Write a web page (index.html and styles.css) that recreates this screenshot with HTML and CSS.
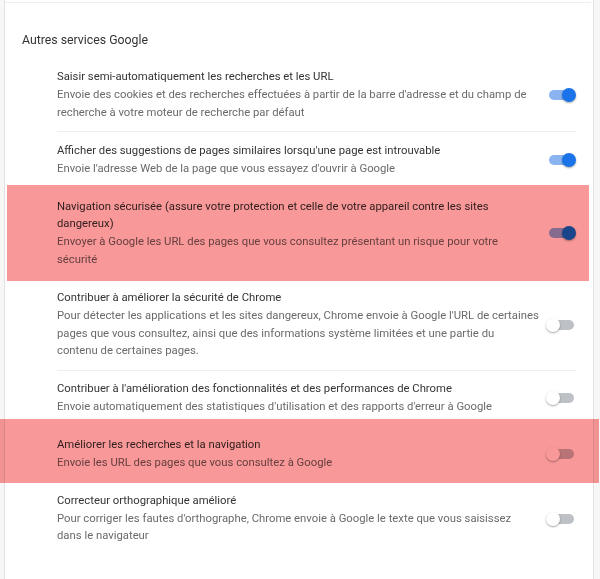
FILE: index.html
```html
<!DOCTYPE html>
<html lang="fr">
<head>
<meta charset="utf-8">
<title>Autres services Google</title>
<link rel="stylesheet" href="styles.css">
</head>
<body>
<div class="card">
  <div class="divider"></div>
  <h2 class="section-title">Autres services Google</h2>
  <div class="list">
    <div class="row">
      <div class="text">
        <div class="title">Saisir semi-automatiquement les recherches et les URL</div>
        <div class="desc">Envoie des cookies et des recherches effectuées à partir de la barre d'adresse et du champ de recherche à votre moteur de recherche par défaut</div>
      </div>
      <span class="toggle on"><span class="knob"></span></span>
    </div>
    <div class="row">
      <div class="text">
        <div class="title">Afficher des suggestions de pages similaires lorsqu'une page est introuvable</div>
        <div class="desc">Envoie l'adresse Web de la page que vous essayez d'ouvrir à Google</div>
      </div>
      <span class="toggle on"><span class="knob"></span></span>
    </div>
    <div class="row mark mark-a">
      <div class="text">
        <div class="title">Navigation sécurisée (assure votre protection et celle de votre appareil contre les sites dangereux)</div>
        <div class="desc">Envoyer à Google les URL des pages que vous consultez présentant un risque pour votre<br>sécurité</div>
      </div>
      <span class="toggle on"><span class="knob"></span></span>
    </div>
    <div class="row">
      <div class="text">
        <div class="title">Contribuer à améliorer la sécurité de Chrome</div>
        <div class="desc">Pour détecter les applications et les sites dangereux, Chrome envoie à Google l'URL de certaines pages que vous consultez, ainsi que des informations système limitées et une partie du<br>contenu de certaines pages.</div>
      </div>
      <span class="toggle"><span class="knob"></span></span>
    </div>
    <div class="row">
      <div class="text">
        <div class="title">Contribuer à l'amélioration des fonctionnalités et des performances de Chrome</div>
        <div class="desc">Envoie automatiquement des statistiques d'utilisation et des rapports d'erreur à Google</div>
      </div>
      <span class="toggle"><span class="knob"></span></span>
    </div>
    <div class="row mark mark-b">
      <div class="text">
        <div class="title">Améliorer les recherches et la navigation</div>
        <div class="desc">Envoie les URL des pages que vous consultez à Google</div>
      </div>
      <span class="toggle"><span class="knob"></span></span>
    </div>
    <div class="row">
      <div class="text">
        <div class="title">Correcteur orthographique amélioré</div>
        <div class="desc">Pour corriger les fautes d'orthographe, Chrome envoie à Google le texte que vous saisissez<br>dans le navigateur</div>
      </div>
      <span class="toggle"><span class="knob"></span></span>
    </div>
  </div>
</div>
</body>
</html>
```
FILE: styles.css
```css
html, body {
  margin: 0;
  padding: 0;
}
body {
  background: #f7f7f7;
  font-family: Roboto, "Liberation Sans", Arial, sans-serif;
  color: #333;
}
.card {
  margin: 0 6px 0 4px;
  min-height: 579px;
  background: #fff;
  border-left: 1px solid #e2e2e2;
  border-right: 1px solid #e2e2e2;
  padding-top: 2px;
  box-sizing: border-box;
}
.divider {
  border-top: 1px solid #efefef;
  margin-right: 2px;
}
.section-title {
  margin: 28px 0 8.6px 17px;
  font-size: 12.3px;
  line-height: 19px;
  font-weight: 400;
  color: #333;
}
.list {
  display: flex;
  flex-direction: column;
}
.row {
  position: relative;
  display: flex;
  align-items: center;
  margin-left: 52px;
  margin-right: 17px;
  padding: 9.6px 0;
  border-top: 1px solid #eeeeee;
}
.row:first-child {
  border-top: none;
}
.mark,
.mark + .row {
  border-top-color: transparent;
}
.text {
  flex: 1;
  padding-right: 4px;
  font-size: 11.3px;
  line-height: 17.8px;
}
.title {
  color: #333;
}
.desc {
  color: #6a6a6a;
}
.toggle {
  position: relative;
  flex: none;
  width: 30px;
  height: 14px;
}
.toggle::before {
  content: "";
  position: absolute;
  left: 3px;
  right: 2px;
  top: 2px;
  height: 10px;
  border-radius: 5px;
  background: #bdc1c6;
}
.toggle.on::before {
  background: #8ab4f0;
}
.knob {
  position: absolute;
  top: 0;
  left: 0;
  width: 14px;
  height: 14px;
  border-radius: 50%;
  background: #fff;
  box-shadow: 0 1px 2px rgba(0, 0, 0, 0.35);
}
.toggle.on .knob {
  left: 16px;
  background: #1a73e8;
}
.mark::after {
  content: "";
  position: absolute;
  background: #f99898;
  mix-blend-mode: multiply;
  pointer-events: none;
}
.mark-a::after {
  left: -50px;
  right: -13px;
  top: -2.6px;
  bottom: -2.2px;
}
.mark-b::after {
  left: -57px;
  right: -23px;
  top: -7.4px;
  bottom: -1.8px;
}
```
